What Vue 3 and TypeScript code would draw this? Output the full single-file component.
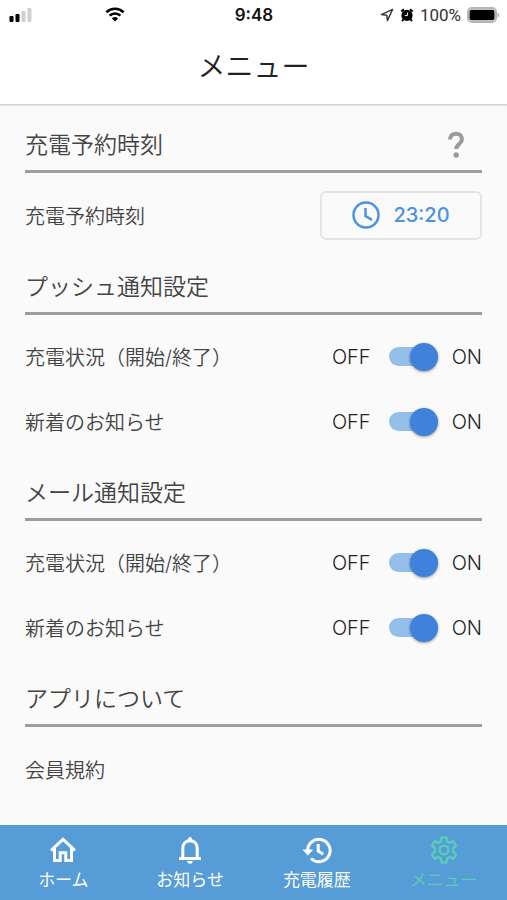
<script setup lang="ts">
import { reactive, ref } from 'vue'

interface Toggle {
  id: string
  label: string
  on: boolean
}

interface Group {
  title: string
  rows: Toggle[]
}

const reservedTime = ref('23:20')

const groups = reactive<Group[]>([
  {
    title: 'プッシュ通知設定',
    rows: [
      { id: 'push-status', label: '充電状況（開始/終了）', on: true },
      { id: 'push-news', label: '新着のお知らせ', on: true },
    ],
  },
  {
    title: 'メール通知設定',
    rows: [
      { id: 'mail-status', label: '充電状況（開始/終了）', on: true },
      { id: 'mail-news', label: '新着のお知らせ', on: true },
    ],
  },
])

const tabs = [
  { id: 'home', label: 'ホーム' },
  { id: 'news', label: 'お知らせ' },
  { id: 'history', label: '充電履歴' },
  { id: 'menu', label: 'メニュー' },
]
const current = ref('menu')
</script>

<template>
  <div class="screen">
    <header class="top">
      <div class="status">
        <div class="status-left">
          <svg class="signal" viewBox="0 0 24 16" aria-hidden="true">
            <rect x="0.5" y="9" width="4" height="6" rx="1.2" />
            <rect x="6.5" y="7" width="4" height="8" rx="1.2" />
            <rect class="dim" x="12.5" y="4" width="4" height="11" rx="1.2" />
            <rect class="dim" x="18.5" y="1" width="4" height="14" rx="1.2" />
          </svg>
          <svg class="wifi" viewBox="0 0 20 15" aria-hidden="true">
            <path d="M1.4 5.2a12.4 12.4 0 0 1 17.2 0" />
            <path d="M4.6 8.6a7.8 7.8 0 0 1 10.8 0" />
            <path class="solid" d="M10 14.4 6.9 11.4a4.4 4.4 0 0 1 6.2 0z" />
          </svg>
        </div>
        <span class="clock">9:48</span>
        <div class="status-right">
          <svg class="arrow" viewBox="0 0 14 14" aria-hidden="true">
            <path d="M12.6 1.4 1.4 6.6l5.4.6.6 5.4z" />
          </svg>
          <svg class="alarm" viewBox="0 0 14 14" aria-hidden="true">
            <circle cx="7" cy="7.4" r="5.6" />
            <path class="bar" d="M1.3 3.6 4 1.3M12.7 3.6 10 1.3M3.4 11.4 2 13M10.6 11.4 12 13" />
            <path class="hand" d="M7.4 4.5v3.1H4.8" />
          </svg>
          <span class="percent">100%</span>
          <svg class="battery" viewBox="0 0 32 16" aria-hidden="true">
            <rect class="shell" x="1" y="1" width="28" height="14" rx="4" />
            <rect x="2.5" y="2.8" width="25" height="10.4" rx="2" />
            <path class="cap" d="M30.5 5.5a2.6 2.6 0 0 1 0 5z" />
          </svg>
        </div>
      </div>
      <h1>メニュー</h1>
    </header>

    <main>
      <section>
        <div class="heading">
          <h2>充電予約時刻</h2>
          <button class="help" type="button" aria-label="ヘルプ">
            <svg viewBox="0 0 18 28" aria-hidden="true">
              <path d="M3 8.5C3 5 5.6 2.8 9 2.8s6 2.2 6 5.4c0 4.6-5.8 4.9-5.8 9.8" />
              <circle cx="9.2" cy="24" r="2.7" />
            </svg>
          </button>
        </div>
        <div class="row tall">
          <span>充電予約時刻</span>
          <button class="time" type="button">
            <svg viewBox="0 0 28 28" aria-hidden="true">
              <circle cx="14" cy="14" r="12.5" />
              <path d="M13.5 7v8l6.5 3.8" />
            </svg>
            {{ reservedTime }}
          </button>
        </div>
      </section>

      <section v-for="group in groups" :key="group.title">
        <div class="heading"><h2>{{ group.title }}</h2></div>
        <div v-for="row in group.rows" :key="row.id" class="row">
          <label :for="row.id">{{ row.label }}</label>
          <div class="choice">
            <span>OFF</span>
            <input :id="row.id" v-model="row.on" class="switch" type="checkbox" role="switch" />
            <span>ON</span>
          </div>
        </div>
      </section>

      <section>
        <div class="heading"><h2>アプリについて</h2></div>
        <a class="row link" href="#terms">会員規約</a>
        <a class="row link" href="#faq">よくあるご質問</a>
      </section>
    </main>

    <nav>
      <a
        v-for="tab in tabs"
        :key="tab.id"
        :href="'#' + tab.id"
        :class="{ active: current === tab.id }"
        @click.prevent="current = tab.id"
      >
        <svg v-if="tab.id === 'home'" viewBox="0 0 28 28" aria-hidden="true">
          <path d="M2 14.5 14 3.3l12 11.2M5.5 12v12.5h5.7v-7.7h5.6v7.7h5.7V12" />
        </svg>
        <svg v-else-if="tab.id === 'news'" viewBox="0 0 28 28" aria-hidden="true">
          <path d="M3 22.5h22M6.8 22.5V12.3C6.8 7.5 9.7 4.7 14 4.7s7.2 2.8 7.2 7.6v10.2" />
          <path class="fill" d="M12 4.5V3a2 2 0 0 1 4 0v1.5zM11.3 25h5.4a2.7 2.7 0 0 1-5.4 0z" />
        </svg>
        <svg v-else-if="tab.id === 'history'" viewBox="0 0 28 28" aria-hidden="true">
          <path d="M4.7 15.5A11.2 11.2 0 1 1 8 22.5M15.2 8v7l5 3.2" />
          <path class="fill" d="M-.6 13.6h10.8l-5.4 6z" />
        </svg>
        <svg v-else class="gear" viewBox="0 0 28 28" aria-hidden="true">
          <path d="M11.6 1.4h4.8l.8 4 2.5 1.4 3.8-1.3 2.5 4.2-3 2.8v3l3 2.8-2.5 4.2-3.8-1.3-2.5 1.4-.8 4h-4.8l-.8-4-2.5-1.4-3.8 1.3L2 18.3l3-2.8v-3L2 9.7l2.5-4.2 3.8 1.3 2.5-1.4z" />
          <circle cx="14" cy="14" r="4.4" />
        </svg>
        <span>{{ tab.label }}</span>
      </a>
    </nav>
  </div>
</template>

<style>
body {
  background: #fafafa;
}
</style>

<style scoped>
.screen {
  height: 100vh;
  display: flex;
  flex-direction: column;
  overflow: hidden;
  background: #fafafa;
  color: #444;
  font-family: Inter, "Noto Sans CJK JP", sans-serif;
  font-size: 20px;
  font-weight: 350;
}
svg {
  display: block;
  flex: none;
  overflow: visible;
}
.top {
  flex: none;
  height: 104px;
  background: #fff;
  box-shadow: 0 1px 2px rgba(0, 0, 0, 0.25);
  z-index: 1;
}
.status {
  height: 30px;
  padding: 0 8px 0 9px;
  display: grid;
  grid-template-columns: 1fr auto 1fr;
  align-items: center;
  color: #111;
  font-size: 16px;
  font-weight: 400;
}
.status-left {
  display: flex;
  justify-content: space-between;
  padding-right: 110px;
}
.status-right {
  display: flex;
  align-items: center;
  justify-content: flex-end;
  gap: 6px;
}
.percent {
  color: #333;
  font-family: Roboto, sans-serif;
  font-size: 17px;
}
.clock {
  font-size: 17px;
  font-weight: 600;
}
.signal {
  width: 24px;
  height: 16px;
}
.signal .dim {
  fill: #d0d0d0;
}
.wifi {
  width: 20px;
  height: 15px;
  fill: none;
  stroke: #000;
  stroke-width: 2.6;
}
.wifi .solid {
  fill: #000;
  stroke: none;
}
.arrow {
  width: 14px;
  height: 14px;
  fill: none;
  stroke: #333;
  stroke-width: 1.4;
  stroke-linejoin: round;
}
.alarm {
  width: 14px;
  height: 14px;
}
.alarm .bar {
  stroke: #000;
  stroke-width: 2;
}
.alarm .hand {
  fill: none;
  stroke: #fff;
  stroke-width: 1;
}
.battery {
  width: 32px;
  height: 16px;
}
.battery .shell {
  fill: #fff;
  stroke: #b5b5b5;
  stroke-width: 2;
}
.battery .cap {
  fill: #b5b5b5;
}
h1 {
  margin: 0;
  color: #222;
  font-size: 28px;
  font-weight: 350;
  line-height: 74px;
  text-align: center;
}
main {
  flex: 1;
  min-height: 0;
  overflow: hidden;
  padding: 2px 25px 0;
}
.heading {
  height: 64px;
  margin-bottom: 9px;
  padding-right: 17px;
  border-bottom: 3px solid #9e9e9e;
  display: flex;
  align-items: center;
  justify-content: space-between;
}
h2 {
  margin: 0;
  padding-top: 13px;
  font-size: 23px;
  font-weight: 350;
  line-height: 34px;
}
.help {
  padding: 13px 0 0;
  border: 0;
  background: none;
}
.help svg {
  width: 18px;
  height: 28px;
  fill: #9a9a9a;
}
.help path {
  fill: none;
  stroke: #9a9a9a;
  stroke-width: 4;
}
.row {
  height: 65px;
  display: flex;
  align-items: center;
  justify-content: space-between;
  color: inherit;
  text-decoration: none;
}
.row.tall {
  height: 66px;
}
.row.link {
  height: 66px;
}
.time {
  width: 162px;
  height: 49px;
  padding: 0;
  display: flex;
  align-items: center;
  justify-content: center;
  gap: 13px;
  border: 2px solid #e4e4e4;
  border-radius: 6px;
  background: #fafafa;
  color: #4a93e0;
  font: inherit;
  font-weight: 500;
}
.time svg {
  width: 28px;
  height: 28px;
  fill: none;
  stroke: currentColor;
  stroke-width: 2.5;
}
.choice {
  display: flex;
  align-items: center;
  gap: 14px;
  color: #222;
}
.switch {
  appearance: none;
  width: 49px;
  height: 19px;
  margin: 0 0 0 4px;
  display: flex;
  align-items: center;
  background: #bdbdbd;
  border-radius: 10px;
}
.switch::before {
  content: "";
  flex: none;
  width: 28px;
  height: 28px;
  border-radius: 50%;
  background: #f5f5f5;
  box-shadow: 0 1px 3px rgba(0, 0, 0, 0.4);
}
.switch:checked {
  justify-content: flex-end;
  background: #94bfea;
}
.switch:checked::before {
  background: #3e82dc;
}
nav {
  flex: none;
  height: 75px;
  display: grid;
  grid-template-columns: repeat(4, 1fr);
  background: #569dd7;
  z-index: 1;
}
nav a {
  padding-top: 11px;
  display: flex;
  flex-direction: column;
  align-items: center;
  gap: 4px;
  color: #fff;
  font-size: 17px;
  font-weight: 400;
  line-height: 25px;
  text-decoration: none;
}
nav a.active {
  color: #5bcdb5;
  font-weight: 350;
}
nav svg {
  width: 28px;
  height: 28px;
  fill: none;
  stroke: currentColor;
  stroke-width: 3;
}
nav .fill {
  fill: currentColor;
  stroke: none;
}
nav .gear {
  stroke-width: 2.4;
  stroke-linejoin: round;
}
</style>
